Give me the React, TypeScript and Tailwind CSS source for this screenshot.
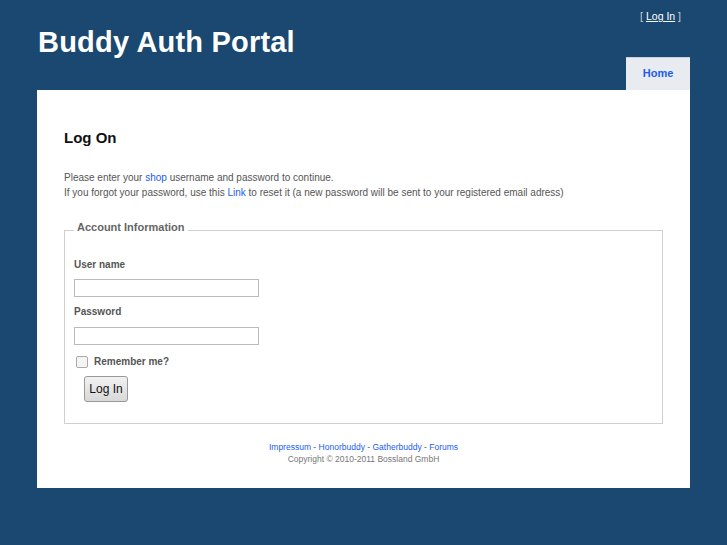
import React from "react";

export default function App() {
  return (
    <div className="min-h-[545px] w-full bg-[#1a4870] pb-[57px]" style={{ fontFamily: '"Liberation Sans", Arial, sans-serif' }}>
      <div className="ml-[36px] w-[654px]">
        {/* header */}
        <div className="relative h-[90px]">
          <div className="absolute right-[9px] top-[9px] text-[10.5px] text-[#c8d0d8]">
            [ <a href="#" className="text-white underline">Log In</a> ]
          </div>
          <h1 className="pl-[2px] pt-[25px] text-[29px] font-bold leading-[34px] tracking-[0.2px] text-white">Buddy Auth Portal</h1>
          <div className="absolute bottom-0 right-0 flex h-[33px] w-[64px] items-center justify-center border-t border-[#c9d2da] bg-[#e8ecf0] pb-[2px] text-[11px] font-bold text-[#1a5cf0]">
            Home
          </div>
        </div>
        {/* main */}
        <div className="ml-[1px] bg-white pb-[23px] pl-[27px] pr-[27px] pt-[39px]">
          <h2 className="text-[15px] font-bold leading-[18px] text-[#111]">Log On</h2>
          <div className="mt-[23px] text-[10px] leading-[15px] text-[#555]">
            <p>
              Please enter your <a href="#" className="text-[#1a5cf0]">shop</a> username and password to continue.
            </p>
            <p>
              If you forgot your password, use this <a href="#" className="text-[#1a5cf0]">Link</a> to reset it (a new password will be sent to your registered email adress)
            </p>
          </div>
          <fieldset className="mt-[22px] h-[202px] border border-[#d0d0d0] px-[9px]">
            <legend className="ml-[0px] px-[3px] pb-[6px] text-[11px] font-bold leading-[11px] text-[#666]">Account Information</legend>
            <div className="mt-[20px] text-[10px] font-bold leading-[12px] text-[#555]">User name</div>
            <input type="text" className="mt-[8px] block h-[18px] w-[185px] border border-[#bbb] bg-white" />
            <div className="mt-[9px] text-[10px] font-bold leading-[12px] text-[#555]">Password</div>
            <input type="password" className="mt-[9px] block h-[18px] w-[185px] border border-[#bbb] bg-white" />
            <div className="mt-[9px] flex items-center">
              <span className="ml-[2px] inline-block h-[12px] w-[12px] rounded-[2px] border border-[#aaa] bg-[#f4f4f4]" />
              <span className="ml-[6px] text-[10px] font-bold text-[#555]">Remember me?</span>
            </div>
            <button className="ml-[10px] mt-[7px] flex h-[26px] w-[44px] items-center justify-center rounded-[3px] border border-[#999] bg-gradient-to-b from-[#f2f2f2] to-[#d8d8d8] text-[12px] text-[#111]">
              Log In
            </button>
          </fieldset>
          <div className="mt-[17px] text-center text-[8.5px] leading-[12px]">
            <div className="text-[#1a5cf0]">
              <a href="#">Impressum</a> <span className="text-[#555]">-</span> <a href="#">Honorbuddy</a> <span className="text-[#555]">-</span> <a href="#">Gatherbuddy</a> <span className="text-[#555]">-</span> <a href="#">Forums</a>
            </div>
            <div className="text-[#777]">Copyright © 2010-2011 Bossland GmbH</div>
          </div>
        </div>
      </div>
    </div>
  );
}
